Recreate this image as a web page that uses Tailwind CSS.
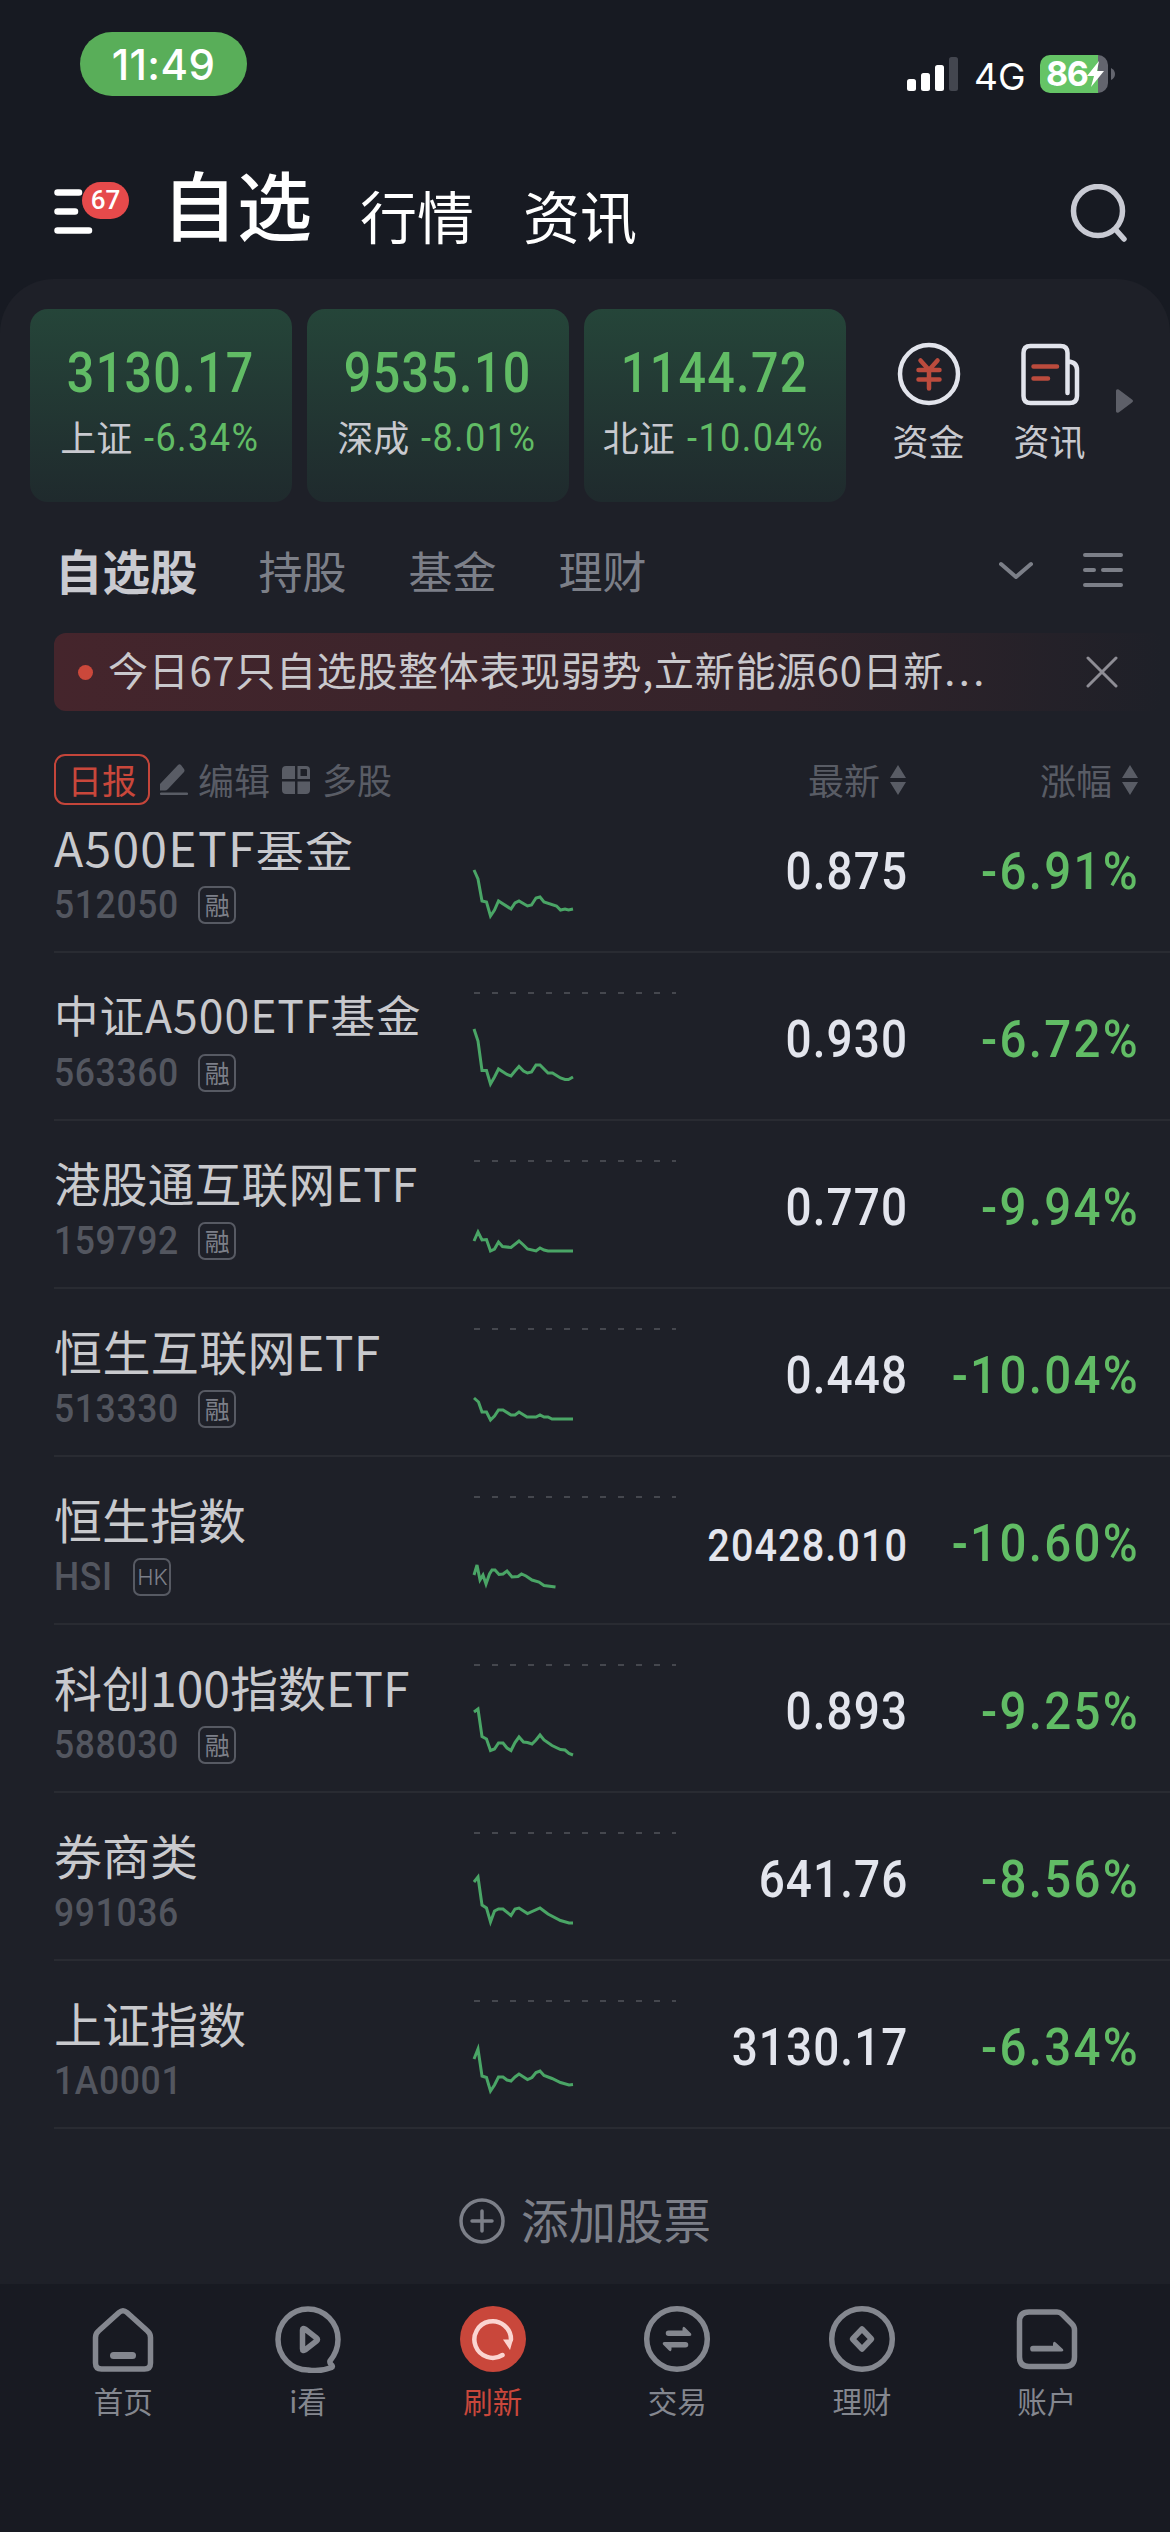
<!DOCTYPE html>
<html lang="zh-CN">
<head>
  <meta charset="UTF-8">
  <meta name="viewport" content="width=device-width, initial-scale=1.0">
  <title>自选</title>
  <script src="https://cdn.jsdelivr.net/npm/@tailwindcss/browser@4"></script>
</head>
<body class="bg-[#171a22]">
<div class="w-[1170px] h-[2532px] flex flex-col overflow-hidden bg-[#171a22] font-['Noto_Sans_CJK_SC',sans-serif] whitespace-nowrap">

  <!-- status bar -->
  <div class="h-[132px] shrink-0 flex items-start justify-between pl-20 pr-[55px] font-['Inter',sans-serif] text-white">
    <div class="mt-8 w-[167px] h-16 rounded-full bg-[#59ae59] flex items-center justify-center text-[42px] font-medium tracking-[.4px]">11:49</div>
    <div class="mt-[52px] h-11 flex items-center">
      <svg class="w-[51px] h-[34px]" viewBox="0 0 51 34" fill="#fff">
        <rect x="0" y="22" width="9" height="12" rx="2.5"/>
        <rect x="14" y="16" width="9" height="18" rx="2.5"/>
        <rect x="28" y="8" width="9" height="26" rx="2.5"/>
        <rect x="42" y="0" width="9" height="34" rx="2.5" fill="#43464f"/>
      </svg>
      <span class="ml-4 mt-1 w-[50px] text-[37px] leading-none">4G</span>
      <div class="ml-4 w-[68px] h-[38px] rounded-[10px] bg-linear-to-r from-[#65c466] from-85% to-[#63656e] to-85% flex items-center pl-1.5">
        <span class="text-[34px] leading-none font-bold -tracking-[1.5px]">86</span>
        <svg class="w-[17px] h-[26px]" viewBox="0 0 17 26" fill="#fff"><path d="M12 0 0 15h7L4 26 17 10h-7z"/></svg>
      </div>
      <svg class="ml-[3px] w-1 h-3" viewBox="0 0 4 12" fill="#63656e"><path d="M0 0q4 2 4 6t-4 6z"/></svg>
    </div>
  </div>

  <!-- main tabs -->
  <div class="h-[147px] shrink-0 flex items-start pl-[54px] pr-[42px] text-white">
    <div class="relative mt-[57px] w-[108px]">
      <svg class="w-10 h-[45px]" viewBox="0 0 40 45" stroke="#fff" stroke-width="6.5" stroke-linecap="round"><path d="M3.5 3.5H25M3.5 22.5H21M3.5 41.5H35"/></svg>
      <span class="absolute left-7 -top-[7px] w-[47px] h-[37px] rounded-full bg-[#e64a4b] flex items-center justify-center font-['Roboto'] text-[26px] font-medium">67</span>
    </div>
    <span class="mt-[33px] text-[75px] leading-[75px] font-medium">自选</span>
    <span class="mt-[54px] ml-12 text-[57px] leading-[57px]">行情</span>
    <span class="mt-[54px] ml-[49px] text-[57px] leading-[57px]">资讯</span>
    <svg class="ml-auto mt-[52px] w-[58px] h-[58px]" viewBox="0 0 58 58" fill="none" stroke="#c8cad3" stroke-width="5.5" stroke-linecap="round"><circle cx="28" cy="27" r="24.5"/><path d="m46 46 8 9"/></svg>
  </div>

  <div class="h-[2005px] shrink-0 flex flex-col rounded-t-[54px] bg-[#1e2028]">
    <!-- index cards -->
    <div class="flex shrink-0 mt-[30px] pl-[30px] h-[193px]">
      <div id="cards" class="flex gap-[15px]"></div>
      <div class="ml-[46px] mt-[33px] w-[73px] flex flex-col items-center">
        <svg class="w-16 h-16" viewBox="0 0 64 64" fill="none" stroke-linecap="round"><circle cx="32" cy="32" r="29" stroke="#e2e4ec" stroke-width="4.5"/><path d="m23.5 18.5 8.5 9.5 8.5-9.5M21.5 28h21M21.5 37.5h21M32 28v18.5" stroke="#bb4b3d" stroke-width="4.5"/></svg>
        <span class="mt-4 text-[36px] leading-[36px] text-[#c8c9cf]">资金</span>
      </div>
      <div class="ml-12 mt-[33px] w-[73px] flex flex-col items-center">
        <svg class="w-16 h-16" viewBox="0 0 64 64" fill="none" stroke-linecap="round"><path d="M49.5 51V11q0-7-7-7h-30q-7 0-7 7v43q0 7 7 7h39q7.5 0 7.5-7V28q0-8-9-8.5" stroke="#e2e4ec" stroke-width="4.5"/><path d="M15.5 24.5H39M15.5 36.5H30" stroke="#bb4b3d" stroke-width="4.5"/></svg>
        <span class="mt-4 text-[36px] leading-[36px] text-[#c8c9cf]">资讯</span>
      </div>
      <svg class="ml-[30px] mt-20 w-[17px] h-6" viewBox="0 0 17 24" fill="#5d5f68"><path d="M0 1.5Q1-1 4 1.5L16 10.5q2 1.500 0 3L4 22.5Q1 25 0 22.5z"/></svg>
    </div>

    <!-- list tabs -->
    <div class="flex shrink-0 items-center h-[130px] mt-[3px] pl-[55px] pr-[47px] text-[44px] text-[#7c7f88]">
      <span class="text-[47.5px] font-bold text-[#c9cad0]">自选股</span>
      <span class="ml-[61px]">持股</span>
      <span class="ml-[62px]">基金</span>
      <span class="ml-[62px]">理财</span>
      <svg class="ml-auto w-[34px] h-5" viewBox="0 0 34 20" fill="none" stroke="currentColor" stroke-width="4" stroke-linecap="round" stroke-linejoin="round"><path d="m2 4 15 13L32 4"/></svg>
      <svg class="ml-[50px] w-10 h-9" viewBox="0 0 40 36" stroke="currentColor" stroke-width="4" stroke-linecap="round"><path d="M2 3h36M2 18h9M20 18h18M2 33h36"/></svg>
    </div>

    <!-- notice -->
    <div class="ml-[54px] -mt-0.5 w-[1110px] h-[78px] shrink-0 rounded-[12px] bg-linear-to-r from-[#45252c] via-[#33232a] via-65% to-[#1e2028] flex items-center pl-6">
      <span class="w-[15px] h-[15px] rounded-full bg-[#cb483b]"></span>
      <span class="ml-[15px] -mt-1 w-[870px] text-[40px] tracking-[0.7px] text-[#c9c8cc]">今日67只自选股整体表现弱势,立新能源60日新<span class="font-['Inter'] tracking-[3px]">...</span></span>
      <svg class="ml-[108px] w-8 h-8" viewBox="0 0 32 32" stroke="#8e8d95" stroke-width="3" stroke-linecap="round"><path d="m2 2 28 28M30 2 2 30"/></svg>
    </div>

    <!-- column header -->
    <div class="h-[121px] shrink-0 flex items-center pt-[16px] pl-[54px] pr-8 text-[36px] leading-[36px] text-[#595c65]">
      <span class="w-24 h-[51px] rounded-[11px] border-2 border-[#c4453a] text-[#c9473b] text-[34.5px] flex items-center justify-center pb-0.5">日报</span>
      <svg class="ml-2.5 w-7 h-[31px]" viewBox="0 0 28 31" fill="currentColor"><path d="M18 1q1.500-1.500 3 0l3 4q1 1.500 0 3L8 25q-1.500 1.500-3 1.500H0V20zM1 28.500h26a1.200 1.200 0 0 1 0 2.500H1a1.200 1.200 0 0 1 0-2.500z"/></svg>
      <span class="ml-2.5 pb-0.5">编辑</span>
      <svg class="ml-3 w-7 h-7" viewBox="0 0 28 28" fill="currentColor"><path d="M4 0h9v13H0V4q0-4 4-4zM0 15.500h13V28H4q-4 0-4-4zM15.500 15.500H28V24q0 4-4 4h-8.500z"/><path d="M17 1.500h7q2.500 0 2.500 2.500v7.500H17z" fill="none" stroke="currentColor" stroke-width="3"/></svg>
      <span class="ml-3 pb-0.5 text-[35px]">多股</span>
      <span class="ml-auto pb-0.5">最新</span>
      <svg class="ml-2.5 w-4 h-[30px]" viewBox="0 0 16 30" fill="currentColor"><path d="m8 0 8 13H0zM8 30l8-13H0z"/></svg>
      <span class="ml-[134px] pb-0.5">涨幅</span>
      <svg class="ml-2.5 w-4 h-[30px]" viewBox="0 0 16 30" fill="currentColor"><path d="m8 0 8 13H0zM8 30l8-13H0z"/></svg>
    </div>

    <!-- stock rows, scrolled so that the first one is cut at the top -->
    <div class="h-[1297px] shrink-0 overflow-hidden flex flex-col justify-end" id="rows"></div>

    <div class="flex-1 flex items-center justify-center pt-7 text-[#7c7f88]">
      <svg class="w-[46px] h-[46px]" viewBox="0 0 46 46" fill="none" stroke="currentColor" stroke-width="3.5" stroke-linecap="round"><circle cx="23" cy="23" r="21"/><path d="M13 23h20M23 13v20"/></svg>
      <span class="ml-4 pb-1 text-[47.5px]">添加股票</span>
    </div>
  </div>

  <!-- bottom nav -->
  <div class="flex-1 grid grid-cols-6 px-[31px] pt-[21px] bg-[#181a22] text-[29.5px] leading-[30px] text-[#84878f]">
    <div class="flex flex-col items-center gap-3">
      <svg class="w-[68px] h-[68px]" viewBox="0 0 68 68" fill="none" stroke="currentColor" stroke-width="5.5" stroke-linejoin="round" stroke-linecap="round"><path d="M30 7.500q4-3.500 8 0L58 25.500q3.500 3 3.500 7V58q0 6-6 6h-43q-6 0-6-6V32.500q0-4 3.500-7z"/><path d="M24.500 50.500h19" stroke-width="7"/></svg>
      <span>首页</span>
    </div>
    <div class="flex flex-col items-center gap-3">
      <svg class="w-[68px] h-[68px]" viewBox="0 0 68 68" fill="none" stroke="currentColor" stroke-width="5.5" stroke-linejoin="round" stroke-linecap="round"><path d="M56 56Q64 46 64 34.500A30 30.500 0 1 0 34 65q12 2 23.500-2.500 2-1-.5-3-1.500-1.500-1-3.500z"/><path d="M28.500 25v19q0 2.500 2.500 1L42.500 36q2-1.500 0-3L31 24q-2.500-1.500-2.500 1z"/></svg>
      <span>i看</span>
    </div>
    <div class="flex flex-col items-center gap-3 text-[#c9473b]">
      <svg class="w-[68px] h-[68px]" viewBox="0 0 68 68"><circle cx="34" cy="34" r="33" fill="currentColor"/><path d="M43.500 50A18.300 18.300 0 1 1 52 34.500" fill="none" stroke="#fbd5d1" stroke-width="4.5" stroke-linecap="round"/><path d="M44 34.500h10l-3 10.500z" fill="#fbd5d1"/></svg>
      <span>刷新</span>
    </div>
    <div class="flex flex-col items-center gap-3">
      <svg class="w-[68px] h-[68px]" viewBox="0 0 68 68" fill="currentColor"><circle cx="34" cy="34" r="30.3" fill="none" stroke="currentColor" stroke-width="5.5"/><path d="M25.500 25.500h14v-2q.5-3 2.500-1l6 6q1 2.500-1.500 2.500h-21a2.700 2.700 0 0 1 0-5.500zM42.500 42.500h-14v2q-.5 3-2.500 1l-6-6q-1-2.500 1.500-2.500h21a2.700 2.700 0 0 1 0 5.500z"/></svg>
      <span>交易</span>
    </div>
    <div class="flex flex-col items-center gap-3">
      <svg class="w-[68px] h-[68px]" viewBox="0 0 68 68" fill="none" stroke="currentColor" stroke-width="5.5" stroke-linejoin="round"><circle cx="34" cy="34" r="30.3"/><path d="m34 24 9.500 10L34 44l-9.500-10z"/></svg>
      <span>理财</span>
    </div>
    <div class="flex flex-col items-center gap-3">
      <svg class="w-[68px] h-[68px]" viewBox="0 0 68 68" fill="none" stroke="currentColor" stroke-width="5.5" stroke-linejoin="round"><path d="M16 7h28q3 0 5 2l10 10q2.500 2.500 2.500 6v27q0 9.500-9.500 9.500H16q-9.500 0-9.500-9.500V16.500Q6.500 7 16 7z"/><path d="M20 40.800h20v-2q.5-3.500 3-1l7 6.500q1 2.200-1.500 2.200H20a2.700 2.700 0 0 1 0-5.700z" fill="currentColor" stroke="none"/></svg>
      <span>账户</span>
    </div>
  </div>
</div>

<script>
  var cards = [
    ['3130.17', '上证', '-6.34%'],
    ['9535.10', '深成', '-8.01%'],
    ['1144.72', '北证', '-10.04%']
  ];
  document.getElementById('cards').innerHTML = cards.map(c => `
    <div class="w-[262px] rounded-[18px] bg-linear-to-b from-[#254539] to-[#1f2a2d] flex flex-col items-center pt-[37px] text-[#61bc65]">
      <span class="font-['Roboto'] font-medium text-[55px] leading-[55px] tracking-[1.5px] scale-x-[.88]">${c[0]}</span>
      <div class="mt-[18px] flex items-center text-[36px] leading-[38px]">
        <span class="-mt-1 text-[#c8c9cf]">${c[1]}</span>
        <span class="ml-3 -mr-1 font-['Roboto'] text-[38px] tracking-[1.5px] scale-x-[.95] origin-left">${c[2]}</span>
      </div>
    </div>`).join('');

  // name, name size class, code, tag, price, price size class, change, sparkline points
  var rows = [
    ['A500ETF基金', 'text-[48px] tracking-[1.3px]', '512050', '融', '0.875', 'text-[51px]', '-6.91%', '0,85 4,94 8,116 12.5,117 16.5,131 20.5,125 24.5,116 37,124 41,118 45,116 53.5,121 57.5,120 62,113 66,112 70,117 82.5,121 86.5,125 91,124 94.5,125 99,124'],
    ['中证A500ETF基金', 'text-[44.5px] tracking-[1px]', '563360', '融', '0.930', 'text-[51px]', '-6.72%', '0,76 4,88 8,117.5 12.5,117.5 16.5,131 20.5,124 24.5,116 33,121.5 37,123 41,118 45,113.5 49.5,118 53.5,120 57.5,119 62,112 66,112 74,120 78.5,120 86.5,125 91,126.5 94.5,126.5 99,124'],
    ['港股通互联网ETF', 'text-[46.5px] tracking-[.4px]', '159792', '融', '0.770', 'text-[51px]', '-9.94%', '0,120 4,111 8,119 12.5,118.5 16.5,130 20.5,128 24.5,121 28.5,125.5 37,126.5 45,120 49.5,124 53.5,128 62,130 66,127 70,129 74,130 99,130'],
    ['恒生互联网ETF', 'text-[48px] tracking-[.4px]', '513330', '融', '0.448', 'text-[51px]', '-10.04%', '0,109 4.5,113 8,123 12.5,123 16.5,131 20.5,127 24.5,121 29,121 37,126 41,126 45,123 53,128 62,128 66,126 70,128 74,128 78,130 99,130'],
    ['恒生指数', 'text-[48px]', 'HSI', 'HK', '20428.010', 'text-[44px]', '-10.60%', '0,118 3,108 6,123 9,118 12,127 15.5,117 18,113 21,113 25,117.5 29,117 33,114 38,120 44,119.5 47.5,117 52,119 58,123 65,125 70,128.5 81.5,130'],
    ['科创100指数ETF', 'text-[48px]', '588030', '融', '0.893', 'text-[51px]', '-9.25%', '0,87 4,84 8,111.5 12.5,114 16.5,125.5 20.5,124 24.5,118 29,118 33,123 37,125.5 41,117.5 45,112 49.5,117 53.5,117.5 58,119 62,115 66,110 70,115 78,120.5 86.5,124.5 91,125 95,128.5 99,130'],
    ['券商类', 'text-[48px]', '991036', '', '641.76', 'text-[51px]', '-8.56%', '0,89 4,84 8,112 12.5,115 16.5,129 20.5,118 24.5,116 29,116 37,122.5 41,116 45,115 53.5,120.5 66,115 70,118 74,121 86.5,127.5 95,130 99,130'],
    ['上证指数', 'text-[48px]', '1A0001', '', '3130.17', 'text-[51px]', '-6.34%', '0,98 4,88 8,115 12.5,116.5 16.5,130 20.5,124 24.5,116 29,116 33,119 37,120 41,116 45,113 53.5,118.5 58,116.5 62,111.5 66,110 70,114.5 78,117.5 86.5,121.5 95,124 99,123.5']
  ];
  var tags = {
    '融': `<span class="ml-[7px] w-[38px] h-[38px] rounded-[7px] border-2 border-[#575a63] flex items-center justify-center pb-0.5 text-[25px] leading-none text-[#7c7f88]">融</span>`,
    'HK': `<span class="ml-[15px] w-[38px] h-[38px] rounded-[7px] border-2 border-[#575a63] flex items-center justify-center font-['Inter'] font-light text-[22px] leading-none text-[#7c7f88]">HK</span>`
  };
  document.getElementById('rows').innerHTML = rows.map(r => `
    <div class="ml-[54px] h-[168px] shrink-0 flex border-b-2 border-[#292b32]">
      <div class="w-[420px] pt-[31px] flex flex-col">
        <span class="${r[1]} leading-[60px] text-[#c8c9cd]">${r[0]}</span>
        <div class="mt-[10px] flex items-center h-[38px]">
          <span class="font-['Roboto'] font-medium text-[39px] tracking-[.7px] scale-x-[.91] origin-left text-[#53565f]">${r[2]}</span>
          ${tags[r[3]] || ''}
        </div>
      </div>
      <svg class="w-[202px] h-[168px] shrink-0 overflow-visible" viewBox="0 0 202 168" fill="none">
        <path d="M0 40H202" stroke="#45474e" stroke-width="2" stroke-dasharray="6 12"/>
        <polyline points="${r[7]}" stroke="#4aa566" stroke-width="3"/>
      </svg>
      <div class="w-[494px] pt-[55px] pr-[30px] h-[130px] flex items-baseline justify-end font-['Roboto'] font-medium leading-[64px]">
        <span class="${r[5]} tracking-[1.2px] scale-x-[.9] origin-right text-[#e3e5ed]">${r[4]}</span>
        <span class="w-[232px] text-right text-[51px] tracking-[2.5px] scale-x-[.93] origin-right text-[#61bc65]">${r[6]}</span>
      </div>
    </div>`).join('');
</script>
</body>
</html>
